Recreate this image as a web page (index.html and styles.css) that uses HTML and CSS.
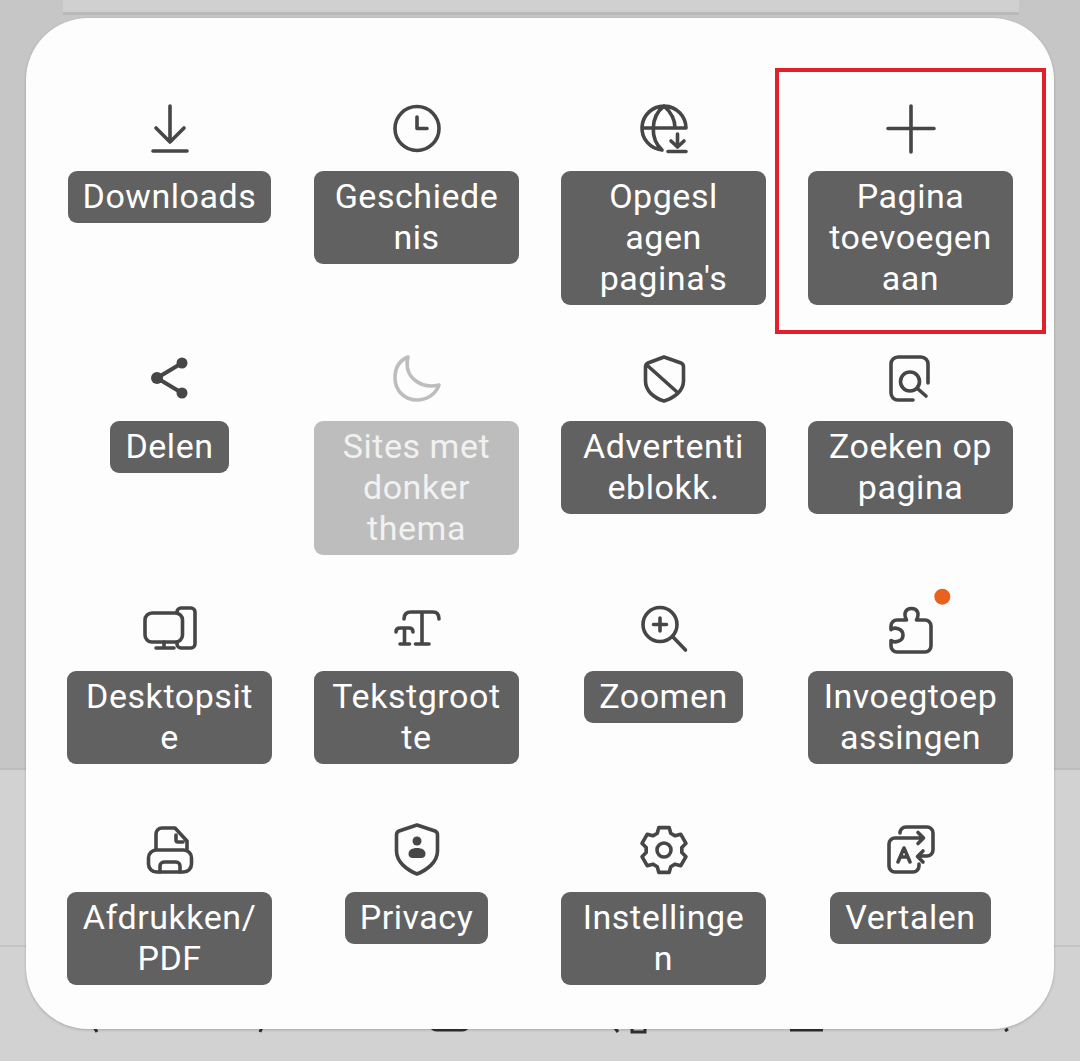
FILE: index.html
```html
<!DOCTYPE html>
<html lang="nl">
<head>
<meta charset="utf-8">
<title>Menu</title>
<link rel="stylesheet" href="styles.css">
</head>
<body>
<div class="backdrop">
  <div class="band"><div class="sheet-edge"></div></div>
  <div class="bar"></div>
  <div class="nav">
    <svg class="nav-bits" width="1080" height="114" viewBox="0 0 1080 114"><path d="M94 80l3 5M262 80l-2 5M431 80q2 3 6 3h25q4 0 6-3M615 81l3 4M632 80h13v5h-13zM790 83h33M1005 84l3-2"/></svg>
  </div>
</div>
<main class="panel">
  <div class="grid">
    <div class="item">
      <svg class="icon" viewBox="0 0 48 48"><path d="M24 1V37M10 23L24 37L38 23M7 46H41"/></svg>
      <span class="label">Downloads</span>
    </div>
    <div class="item">
      <svg class="icon" viewBox="0 0 48 48"><circle cx="24" cy="23.5" r="22"/><path d="M24 12V23.5H34"/></svg>
      <span class="label">Geschiede<wbr>nis</span>
    </div>
    <div class="item">
      <svg class="icon" viewBox="0 0 48 48"><path d="M46 23A22 22 0 1 0 22 45M24 1C10 12 10 34 22 45M24 1C32 8 35 16 35 23M2 23H46M37.5 29V41M31 36L37.5 42L44 36M28 46.5H46"/></svg>
      <span class="label">Opgesl<wbr>agen <wbr>pagina's</span>
    </div>
    <div class="item">
      <svg class="icon" viewBox="0 0 48 48"><path d="M24 1V47M1 23.500H47"/></svg>
      <span class="label">Pagina toevoegen aan</span>
    </div>

    <div class="item">
      <svg class="icon icon-solid" viewBox="0 0 48 48"><path class="thick" d="M36 8L11 23L36 38"/><circle cx="36" cy="8" r="5.500"/><circle cx="11" cy="23" r="6"/><circle cx="36" cy="38" r="5.500"/></svg>
      <span class="label">Delen</span>
    </div>
    <div class="item item-off">
      <svg class="icon" viewBox="0 0 48 48"><path d="M15 2C5 6 2 15 2 23C2 36 12 45 24 45C34 45 43 39 46 30C30 34 10 24 15 2Z"/></svg>
      <span class="label">Sites met donker thema</span>
    </div>
    <div class="item">
      <svg class="icon" viewBox="0 0 48 48"><path d="M24 2L41 8Q43.500 9 43.500 12V26C43.500 36 34 43 24 46C14 43 5.500 36 5.500 26V12Q5.500 9 8 8ZM8.500 11.500L37 37"/></svg>
      <span class="label">Advertenti<wbr>eblokk.</span>
    </div>
    <div class="item">
      <svg class="icon" viewBox="0 0 48 48"><path d="M41 28V9A7 7 0 0 0 34 2H11A7 7 0 0 0 4 9V38A7 7 0 0 0 11 45H26M31 34L39 41"/><circle cx="23" cy="26.500" r="9.500"/></svg>
      <span class="label">Zoeken op pagina</span>
    </div>

    <div class="item">
      <svg class="icon" viewBox="0 0 48 48"><rect x="-1" y="8" width="37.500" height="29" rx="7"/><path d="M31 8V7A4 4 0 0 1 35 3H45A4 4 0 0 1 49 7V39A4 4 0 0 1 45 43H35A4 4 0 0 1 31 39V37M18 37V43M10 43H28"/></svg>
      <span class="label">Desktopsit<wbr>e</span>
    </div>
    <div class="item">
      <svg class="icon" viewBox="0 0 48 48"><path d="M11 14C11 9 14 7 18 7H40C44 7 46 9 46 14M29 7V39M22.500 39H36M3 27C3 24 5 23 7 23H16C18 23 20 24 20 27M11.500 23V39M7 39H16.500"/></svg>
      <span class="label">Tekstgroot<wbr>te</span>
    </div>
    <div class="item">
      <svg class="icon" viewBox="0 0 48 48"><circle cx="20" cy="19.500" r="17"/><path d="M33 32L45.500 45M20 13V26M13.500 19.500H26.500"/></svg>
      <span class="label">Zoomen</span>
    </div>
    <div class="item">
      <svg class="icon" viewBox="0 0 48 48"><path d="M10 15H19.500C16 8 19 3.500 24.500 3.500C30 3.500 33 8 29.500 15H38A6 6 0 0 1 44 21V41A6 6 0 0 1 38 47H10A6 6 0 0 1 4 41V35.500C7 38 16 37 16 30C16 23 7 22 4 24.500V21A6 6 0 0 1 10 15Z"/><circle class="dot" cx="55.300" cy="-8.300" r="8"/></svg>
      <span class="label">Invoegtoep<wbr>assingen</span>
    </div>

    <div class="item item-last">
      <svg class="icon" viewBox="0 0 48 48"><path d="M10 23V8A6 6 0 0 1 16 2H29L41 15V23M30 9V14A2 2 0 0 0 32 16H37"/><rect x="2.500" y="24" width="43" height="22" rx="8"/><path d="M14 46V40A4 4 0 0 1 18 36H30A4 4 0 0 1 34 40V46"/></svg>
      <span class="label">Afdrukken/ PDF</span>
    </div>
    <div class="item item-last">
      <svg class="icon" viewBox="0 0 48 48"><path d="M24 -1L42 5Q44.500 6 44.500 9V25C44.500 36 34 44 24 48C14 44 3.500 36 3.500 25V9Q3.500 6 6 5Z"/><circle class="fill" cx="24" cy="15" r="4.500"/><path class="fill" d="M15.500 28C15.500 24 19 22 24 22C29 22 32.500 24 32.500 28C32.500 31 30 32 28 32H20C18 32 15.500 31 15.500 28Z"/></svg>
      <span class="label">Privacy</span>
    </div>
    <div class="item item-last">
      <svg class="icon" viewBox="0 0 48 48"><polygon points="18.830,1.590 29.170,1.590 30.740,7.310 35.080,9.820 40.820,8.310 45.990,17.280 41.820,21.500 41.820,26.500 45.990,30.720 40.820,39.690 35.080,38.180 30.740,40.690 29.170,46.410 18.830,46.410 17.260,40.690 12.920,38.180 7.180,39.690 2.010,30.720 6.180,26.500 6.180,21.500 2.010,17.280 7.180,8.310 12.920,9.820 17.260,7.310"/><circle cx="24" cy="24" r="7"/></svg>
      <span class="label">Instellinge<wbr>n</span>
    </div>
    <div class="item item-last">
      <svg class="icon" viewBox="0 0 48 48"><path d="M36 12H8A6 6 0 0 0 2 18V40A6 6 0 0 0 8 46H26A6 6 0 0 0 32 40V38M31 6.500L36.500 12L31 17.500M13 6V7A6 6 0 0 1 19 1H40A6 6 0 0 1 46 7V24A6 6 0 0 1 40 30H31M36 25L30.500 30.500L36 36M11 36L17 22L23 36M13 31H21"/></svg>
      <span class="label">Vertalen</span>
    </div>
  </div>
  <div class="highlight"></div>
</main>
</body>
</html>
```
FILE: styles.css
```css
* { box-sizing: border-box; }
html, body { margin: 0; height: 1061px; overflow: hidden; }
body { position: relative; background: #d2d2d2; font-family: Roboto, "Noto Sans", sans-serif; }

.backdrop { height: 1061px; display: flex; flex-direction: column; }
.band { height: 768px; background: #c6c6c6; }
.sheet-edge { height: 15px; margin: 0 61px 0 63px; background: #d0d0d0; border-bottom: 3px solid #b9b9b9; }
.bar { height: 177px; border-top: 2px solid #bdbdbd; background: #d2d2d2; }
.nav { flex: 1; border-top: 2px solid #c4c4c4; }
.nav-bits { display: block; fill: none; stroke: #303030; stroke-width: 3; }

.panel {
  position: absolute; left: 26px; top: 18px;
  width: 1028px; height: 1011px;
  padding: 87px 20px 0;
  background: #fdfdfd;
  border-radius: 62px;
  box-shadow: 0 1px 3px rgba(0, 0, 0, .2);
}
.grid { display: grid; grid-template-columns: repeat(4, 247px); row-gap: 50px; }
.item { display: flex; flex-direction: column; align-items: center; gap: 18px; }
.item-last { margin-top: 12px; }

.icon { display: block; width: 48px; height: 48px; overflow: visible; fill: none; stroke: #464646; stroke-width: 3.6; stroke-linecap: round; stroke-linejoin: round; }
.icon .fill, .icon-solid circle { fill: #464646; stroke: none; }
.icon .thick { stroke-width: 4; }
.icon .dot { fill: #e8611f; stroke: none; }
.item-off .icon { stroke: #bdbdbd; }

.label {
  max-width: 205px;
  padding: 5px 15px 6px;
  border-radius: 9px;
  background: #616161;
  color: #fff;
  font-size: 34px;
  line-height: 41px;
  letter-spacing: .55px;
  text-align: center;
  overflow-wrap: anywhere;
}
.item-off .label { background: #bdbdbd; color: #f1f1f1; }

.highlight {
  position: absolute; left: 749px; top: 50px;
  width: 271px; height: 266px;
  border: 4px solid #e1202c;
}
```
